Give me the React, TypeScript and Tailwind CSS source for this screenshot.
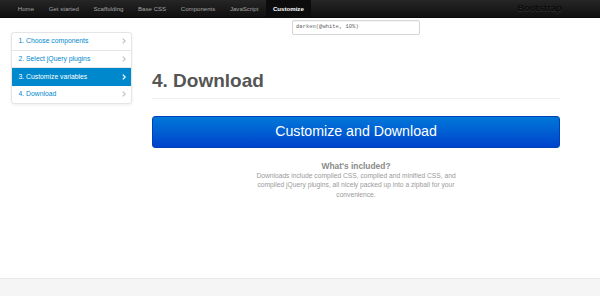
import React from "react";

const navLinks = ["Home", "Get started", "Scaffolding", "Base CSS", "Components", "JavaScript", "Customize"];

const steps = [
  "1. Choose components",
  "2. Select jQuery plugins",
  "3. Customize variables",
  "4. Download",
];

const Chevron = ({ active }: { active: boolean }) => (
  <svg width="4" height="6" viewBox="0 0 4 6" className="shrink-0">
    <path
      d="M0.8 0.6 L3.2 3 L0.8 5.4"
      fill="none"
      stroke={active ? "#ffffff" : "#c4c4c4"}
      strokeWidth="1.3"
    />
  </svg>
);

const App = () => {
  return (
    <div className="relative flex h-[296px] w-[600px] flex-col overflow-hidden bg-white font-['Liberation_Sans',Arial,sans-serif]">
      {/* fixed top navbar, sits over the scrolled page */}
      <div className="absolute inset-x-0 top-0 z-10 flex h-[18px] items-stretch justify-between border-b border-[#0a0a0a] bg-gradient-to-b from-[#262626] to-[#101010] pl-[10.5px] pr-[38px]">
        <ul className="flex items-stretch">
          {navLinks.map((link) => (
            <li
              key={link}
              className={
                link === "Customize"
                  ? "flex items-center bg-[#0c0c0c] px-[7.3px] text-[6.1px] font-bold text-white"
                  : "flex items-center px-[7.3px] text-[6.1px] text-[#a3a3a3]"
              }
            >
              {link}
            </li>
          ))}
        </ul>
        <span className="flex items-center text-[9.5px] font-bold text-[#0b0b0b] [text-shadow:0_1px_0_#2e2e2e]">
          Bootstrap
        </span>
      </div>

      <div className="flex flex-1 pl-[11px] pt-[6px]">
        {/* sidebar */}
        <div className="w-[121px] pt-[26px]">
          <ul className="overflow-hidden rounded-[3px] border border-[#e5e5e5] bg-white shadow-[0_1px_3px_rgba(0,0,0,0.07)]">
            {steps.map((step, i) => {
              const active = i === 2;
              return (
                <li
                  key={step}
                  className={
                    active
                      ? "flex h-[17.5px] items-center justify-between bg-[#0088cc] pl-[6.5px] pr-[5.5px] text-[6.8px] text-white"
                      : "flex h-[17.5px] items-center justify-between border-b border-[#e5e5e5] pl-[6.5px] pr-[5.5px] text-[6.8px] text-[#0088cc] last:border-b-0"
                  }
                >
                  <span>{step}</span>
                  <Chevron active={active} />
                </li>
              );
            })}
          </ul>
        </div>

        {/* main column */}
        <div className="ml-[20px] w-[408px]">
          <div className="ml-[140px] mt-[14px] flex h-[14.5px] w-[128px] items-center rounded-[2px] border border-[#d6d6d6] px-[3px] font-['Liberation_Mono',monospace] text-[5.5px] text-[#666] shadow-[inset_0_1px_1px_rgba(0,0,0,0.05)]">
            darken(@white, 10%)
          </div>

          <h1 className="mt-[35px] border-b border-[#eeeeee] pb-[7px] text-[19px] font-bold leading-[21px] text-[#555]">
            4. Download
          </h1>

          <button className="mt-[17px] flex h-[32px] w-full items-center justify-center rounded-[3px] border border-[#0040b8] bg-gradient-to-b from-[#0077d8] to-[#0042cc] text-[14.2px] text-white">
            Customize and Download
          </button>

          <div className="mt-[13.5px] text-center">
            <h4 className="text-[8.4px] font-bold leading-[10px] text-[#8a8a8a]">What's included?</h4>
            <p className="text-[6.7px] leading-[9.3px] text-[#9a9a9a]">
              Downloads include compiled CSS, compiled and minified CSS, and
              <br />
              compiled jQuery plugins, all nicely packed up into a zipball for your
              <br />
              convenience.
            </p>
          </div>
        </div>
      </div>

      <footer className="h-[18px] shrink-0 border-t border-[#e8e8e8] bg-[#f5f5f5]" />
    </div>
  );
};

export default App;
